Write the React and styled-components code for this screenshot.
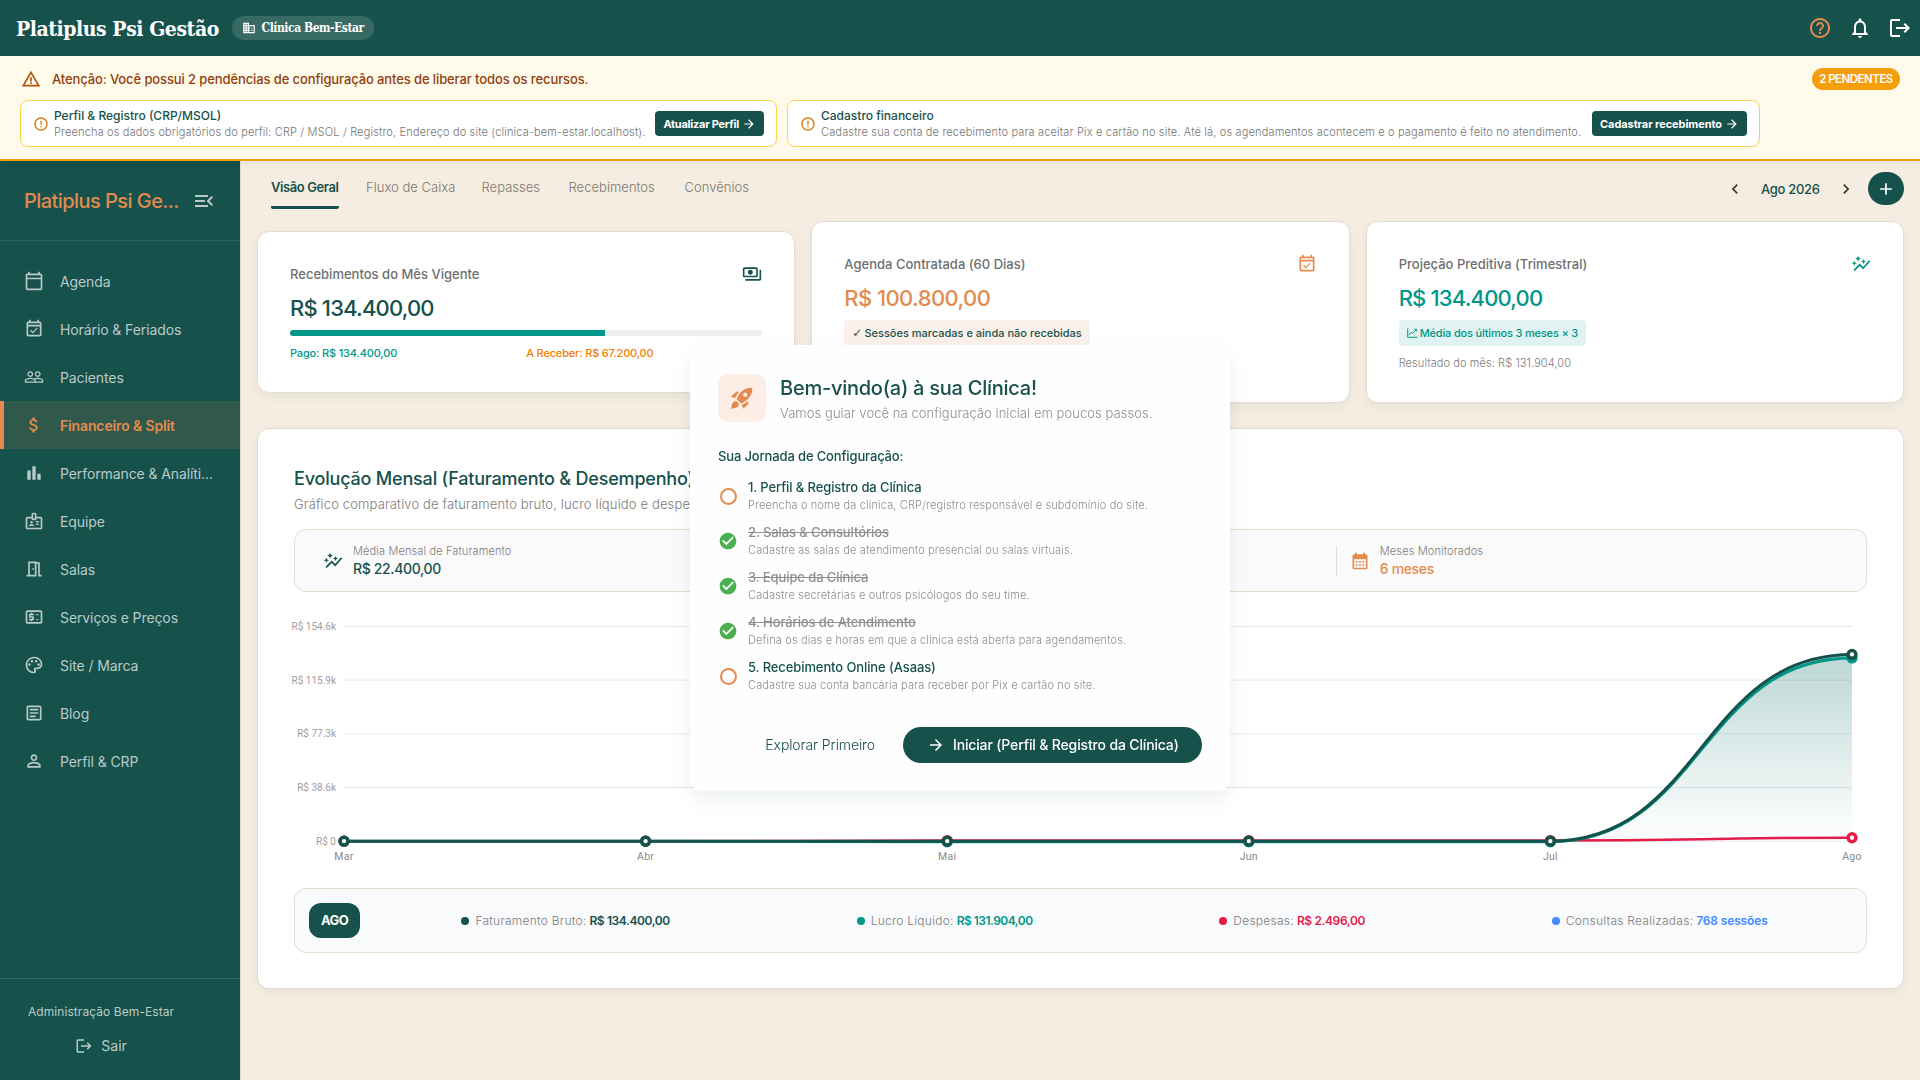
import styled, { createGlobalStyle } from "styled-components";
import {
    MdAdd,
    MdArrowForward,
    MdAttachMoney,
    MdAutoGraph,
    MdBarChart,
    MdBusiness,
    MdCalendarMonth,
    MdCheckCircle,
    MdChevronLeft,
    MdChevronRight,
    MdErrorOutline,
    MdHelpOutline,
    MdLogout,
    MdMenuOpen,
    MdNotificationsNone,
    MdOutlineArticle,
    MdOutlineBadge,
    MdOutlineCalendarToday,
    MdOutlineEventAvailable,
    MdOutlineMeetingRoom,
    MdOutlinePalette,
    MdOutlinePayments,
    MdOutlinePriceChange,
    MdPeopleOutline,
    MdPersonOutline,
    MdRocketLaunch,
    MdWarningAmber,
} from "react-icons/md";

const green = "#16514b";
const teal = "#009688";
const orange = "#e38b4f";
const red = "#e11d48";

const menu = [
    { label: "Agenda", Icon: MdOutlineCalendarToday },
    { label: "Horário & Feriados", Icon: MdOutlineEventAvailable },
    { label: "Pacientes", Icon: MdPeopleOutline },
    { label: "Financeiro & Split", Icon: MdAttachMoney, active: true },
    { label: "Performance & Analíti...", Icon: MdBarChart },
    { label: "Equipe", Icon: MdOutlineBadge },
    { label: "Salas", Icon: MdOutlineMeetingRoom },
    { label: "Serviços e Preços", Icon: MdOutlinePriceChange },
    { label: "Site / Marca", Icon: MdOutlinePalette },
    { label: "Blog", Icon: MdOutlineArticle },
    { label: "Perfil & CRP", Icon: MdPersonOutline },
];

const tabs = [
    { label: "Visão Geral", width: 67.5 },
    { label: "Fluxo de Caixa", width: 88 },
    { label: "Repasses", width: 59.5 },
    { label: "Recebimentos", width: 88.5 },
    { label: "Convênios", width: 65 },
];

const pendencias = [
    {
        title: "Perfil & Registro (CRP/MSOL)",
        text: "Preencha os dados obrigatórios do perfil: CRP / MSOL / Registro, Endereço do site (clinica-bem-estar.localhost).",
        action: "Atualizar Perfil",
        width: 757,
        spacing: "-0.25px",
    },
    {
        title: "Cadastro financeiro",
        text: "Cadastre sua conta de recebimento para aceitar Pix e cartão no site. Até lá, os agendamentos acontecem e o pagamento é feito no atendimento.",
        action: "Cadastrar recebimento",
        width: 973,
        spacing: "-0.08px",
    },
];

const steps = [
    { title: "1. Perfil & Registro da Clínica", text: "Preencha o nome da clínica, CRP/registro responsável e subdomínio do site." },
    { title: "2. Salas & Consultórios", text: "Cadastre as salas de atendimento presencial ou salas virtuais.", done: true },
    { title: "3. Equipe da Clínica", text: "Cadastre secretárias e outros psicólogos do seu time.", done: true },
    { title: "4. Horários de Atendimento", text: "Defina os dias e horas em que a clínica está aberta para agendamentos.", done: true },
    { title: "5. Recebimento Online (Asaas)", text: "Cadastre sua conta bancária para receber por Pix e cartão no site." },
];

const resumo = [
    { label: "Faturamento Bruto:", value: "R$ 134.400,00", color: green, spacing: "-0.4px" },
    { label: "Lucro Líquido:", value: "R$ 131.904,00", color: teal, spacing: "-0.52px" },
    { label: "Despesas:", value: "R$ 2.496,00", color: red, spacing: "-0.38px" },
    { label: "Consultas Realizadas:", value: "768 sessões", color: "#448aff", spacing: "-0.15px" },
];

const meses = ["Mar", "Abr", "Mai", "Jun", "Jul", "Ago"];
const bruto = [0, 0, 0, 0, 0, 134400];
const liquido = [0, 0, -450, -450, -450, 131904];
const despesas = [0, 0, 450, 450, 450, 2496];
const escala = [
    { value: 154600, label: "R$ 154.6k" },
    { value: 115950, label: "R$ 115.9k" },
    { value: 77300, label: "R$ 77.3k" },
    { value: 38650, label: "R$ 38.6k" },
    { value: 0, label: "R$ 0" },
];

const x = i => 50 + i * 301.6;
const y = v => 229.2 - (v / 154600) * 214.8;

function curve(data) {
    let d = `M${x(0)} ${y(data[0])}`;
    for (let i = 1; i < data.length; i++) {
        const half = (x(i) + x(i - 1)) / 2;
        d += ` C${half} ${y(data[i - 1])} ${half} ${y(data[i])} ${x(i)} ${y(data[i])}`;
    }
    return d;
}

function Serie({ data, color, width }) {
    return (
        <g>
            <path d={curve(data)} fill="none" stroke={color} strokeWidth={width} />
            {data.map((v, i) => (
                <circle key={i} cx={x(i)} cy={y(v)} r="3.9" fill="#fff" stroke={color} strokeWidth="3.5" />
            ))}
        </g>
    );
}

function Chart() {
    return (
        <ChartSvg width="1573" height="256">
            <defs>
                <linearGradient id="area" x1="0" y1="0" x2="0" y2="1">
                    <stop offset="0" stopColor="#0f7268" stopOpacity="0.28" />
                    <stop offset="1" stopColor="#0f7268" stopOpacity="0" />
                </linearGradient>
            </defs>
            {escala.map(e => (
                <g key={e.label}>
                    <line x1={x(0)} x2={x(5)} y1={y(e.value)} y2={y(e.value)} stroke="#e2e8f0" />
                    <text x="42" y={y(e.value) + 3.5} textAnchor="end" fill="#9e9e9e" fontSize="10">{e.label}</text>
                </g>
            ))}
            <path d={`${curve(bruto)} V${y(0)} H${x(0)} Z`} fill="url(#area)" />
            <Serie data={despesas} color={red} width="2.5" />
            <Serie data={liquido} color={teal} width="3" />
            <Serie data={bruto} color={green} width="3" />
            {meses.map((m, i) => (
                <text key={m} x={x(i)} y="247.8" textAnchor="middle" fill="#8a8a8a" fontSize="10.5" letterSpacing="0.3">{m}</text>
            ))}
        </ChartSvg>
    );
}

function TrendIcon() {
    return (
        <svg width="11" height="10" viewBox="0 0 11 10" fill="none" stroke="currentColor">
            <path d="M0.7 0.5V9.3H10.5" />
            <path d="M1.8 7.2L4 4.2L5.6 5.4L9.4 1.6M7.2 1.3H9.7V3.6" strokeWidth="0.9" />
        </svg>
    );
}

export default function App() {
    return (
        <>
            <GlobalStyle />
            <Page>
                <Header>
                    <Brand>Platiplus Psi Gestão</Brand>
                    <ClinicPill><MdBusiness size={14} /> Clínica Bem-Estar</ClinicPill>
                    <HeaderIcons>
                        <MdHelpOutline color={orange} />
                        <MdNotificationsNone />
                        <MdLogout />
                    </HeaderIcons>
                </Header>

                <Banner>
                    <BannerTop>
                        <MdWarningAmber size={20} color="#b45309" />
                        <h2>Atenção: Você possui 2 pendências de configuração antes de liberar todos os recursos.</h2>
                        <PendingBadge>2 PENDENTES</PendingBadge>
                    </BannerTop>
                    <BannerItems>
                        {pendencias.map(p => (
                            <BannerItem key={p.title} $width={p.width}>
                                <MdErrorOutline size={16} color="#d97706" />
                                <div>
                                    <h3>{p.title}</h3>
                                    <p>{p.text}</p>
                                </div>
                                <SmallButton $spacing={p.spacing}>{p.action} <MdArrowForward size={14} /></SmallButton>
                            </BannerItem>
                        ))}
                    </BannerItems>
                </Banner>

                <Body>
                    <Sidebar>
                        <SidebarTop>
                            <h1>Platiplus Psi Ge...</h1>
                            <MdMenuOpen size={24} />
                        </SidebarTop>
                        <Menu>
                            {menu.map(({ label, Icon, active }) => (
                                <MenuItem key={label} $active={active}>
                                    <Icon size={20} />
                                    {label}
                                </MenuItem>
                            ))}
                        </Menu>
                        <SidebarBottom>
                            <User>
                                Administração Bem-Estar
                                <Logout><MdLogout size={18} /> Sair</Logout>
                            </User>
                        </SidebarBottom>
                    </Sidebar>

                    <Main>
                        <TopBar>
                            <Tabs>
                                {tabs.map((t, i) => (
                                    <Tab key={t.label} $active={i === 0} $width={t.width}>{t.label}</Tab>
                                ))}
                            </Tabs>
                            <Period>
                                <MdChevronLeft size={20} />
                                <span>Ago 2026</span>
                                <MdChevronRight size={20} />
                                <AddButton><MdAdd size={20} /></AddButton>
                            </Period>
                        </TopBar>

                        <Cards>
                            <Card $short>
                                <CardTop>Recebimentos do Mês Vigente <MdOutlinePayments size={20} color={green} /></CardTop>
                                <Value $color={green}>R$ 134.400,00</Value>
                                <Progress><div /></Progress>
                                <Split>
                                    <Amount $color={teal}>Pago: R$ 134.400,00</Amount>
                                    <Amount $color="#f57c00">A Receber: R$ 67.200,00</Amount>
                                </Split>
                            </Card>
                            <Card>
                                <CardTop>Agenda Contratada (60 Dias) <MdOutlineEventAvailable size={20} color={orange} /></CardTop>
                                <Value $color={orange} $spacing="-0.58px">R$ 100.800,00</Value>
                                <Chip $color={green} $bg="#fcf1ea"><b>✓</b>Sessões marcadas e ainda não recebidas</Chip>
                            </Card>
                            <Card>
                                <CardTop>Projeção Preditiva (Trimestral) <MdAutoGraph size={20} color={teal} /></CardTop>
                                <Value $color={teal}>R$ 134.400,00</Value>
                                <Chip $color={teal} $bg="#e0f2f1" $spacing="-0.17px"><TrendIcon />Média dos últimos 3 meses × 3</Chip>
                                <Result>Resultado do mês: R$ 131.904,00</Result>
                            </Card>
                        </Cards>

                        <ChartCard>
                            <h2>Evolução Mensal (Faturamento & Desempenho)</h2>
                            <p>Gráfico comparativo de faturamento bruto, lucro líquido e despesas</p>
                            <Stats>
                                <Stat $color={green}>
                                    <MdAutoGraph size={20} />
                                    <div>
                                        <span>Média Mensal de Faturamento</span>
                                        <strong>R$ 22.400,00</strong>
                                    </div>
                                </Stat>
                                <Stat />
                                <Stat $color={orange}>
                                    <MdCalendarMonth size={20} />
                                    <div>
                                        <span>Meses Monitorados</span>
                                        <strong>6 meses</strong>
                                    </div>
                                </Stat>
                            </Stats>
                            <Chart />
                            <Summary>
                                <MonthBadge>AGO</MonthBadge>
                                <SummaryList>
                                    {resumo.map(r => (
                                        <SummaryItem key={r.label} $color={r.color} $spacing={r.spacing}>
                                            <i />{r.label} <strong>{r.value}</strong>
                                        </SummaryItem>
                                    ))}
                                </SummaryList>
                            </Summary>
                        </ChartCard>
                    </Main>
                </Body>
            </Page>

            <Overlay>
                <Modal>
                    <ModalTop>
                        <RocketBox><MdRocketLaunch size={26} /></RocketBox>
                        <div>
                            <h2>Bem-vindo(a) à sua Clínica!</h2>
                            <p>Vamos guiar você na configuração inicial em poucos passos.</p>
                        </div>
                    </ModalTop>
                    <Journey>Sua Jornada de Configuração:</Journey>
                    <Steps>
                        {steps.map(s => (
                            <Step key={s.title} $done={s.done}>
                                {s.done ? <MdCheckCircle size={20} /> : <Ring />}
                                <div>
                                    <h3>{s.title}</h3>
                                    <p>{s.text}</p>
                                </div>
                            </Step>
                        ))}
                    </Steps>
                    <Actions>
                        <TextButton>Explorar Primeiro</TextButton>
                        <MainButton><MdArrowForward size={18} /> Iniciar (Perfil & Registro da Clínica)</MainButton>
                    </Actions>
                </Modal>
            </Overlay>
        </>
    );
}

const GlobalStyle = createGlobalStyle`
    * {
        box-sizing: border-box;
        margin: 0;
        padding: 0;
    }

    body {
        font-family: "Inter", sans-serif;
        background-color: #f5ede1;
        overflow: hidden;
    }

    button {
        border: none;
        font-family: inherit;
        white-space: nowrap;
    }

    svg {
        flex-shrink: 0;
    }
`

const Page = styled.div`
    width: 100%;
    height: 100vh;
    display: flex;
    flex-direction: column;
`

const Header = styled.header`
    height: 56px;
    flex-shrink: 0;
    background-color: ${green};
    color: #fff;
    display: flex;
    align-items: center;
    padding: 0 8px 0 16px;
    font-family: "DejaVu Serif Condensed", "DejaVu Serif", serif;
`

const Brand = styled.h1`
    width: 203px;
    font-size: 21px;
    font-weight: 700;
    letter-spacing: -0.45px;
    white-space: nowrap;
`

const ClinicPill = styled.div`
    height: 24px;
    width: 142px;
    margin-left: 12.5px;
    padding-left: 10px;
    border-radius: 12px;
    background-color: rgba(255, 255, 255, 0.15);
    display: flex;
    align-items: center;
    gap: 6px;
    font-size: 12px;
    font-weight: 700;
    letter-spacing: -0.45px;
    white-space: nowrap;
`

const HeaderIcons = styled.div`
    margin-left: auto;
    display: flex;
    gap: 16px;
    font-size: 24px;
`

const Banner = styled.section`
    position: relative;
    height: 105px;
    flex-shrink: 0;
    padding: 12px 20px;
    background-color: #fffbeb;
    border-bottom: 2px solid #f59e0b;
    box-shadow: 0 2px 8px rgba(0, 0, 0, 0.06);
`

const BannerTop = styled.div`
    height: 22px;
    display: flex;
    align-items: center;
    padding-left: 1px;

    & h2{
        margin-left: 11px;
        font-size: 13px;
        font-weight: 550;
        letter-spacing: -0.11px;
        color: #92400e;
    }
`

const PendingBadge = styled.span`
    width: 88px;
    height: 22px;
    margin-left: auto;
    border-radius: 11px;
    background-color: #f59e0b;
    color: #fff;
    font-size: 11.5px;
    font-weight: 600;
    letter-spacing: -0.5px;
    line-height: 22px;
    text-align: center;
`

const BannerItems = styled.div`
    display: flex;
    gap: 10px;
    margin-top: 10px;
`

const BannerItem = styled.div`
    width: ${p => p.$width}px;
    height: 47px;
    padding: 0 12px;
    border: 1px solid #fcd34d;
    border-radius: 8px;
    background-color: #fff;
    display: flex;
    align-items: center;

    & div{
        margin: 0 auto 0 5px;
        white-space: nowrap;
    }

    & h3{
        font-size: 12px;
        font-weight: 500;
        line-height: 17px;
        color: ${green};
    }

    & p{
        font-size: 11px;
        font-weight: 300;
        letter-spacing: 0.158px;
        line-height: 16px;
        color: #757575;
    }
`

const SmallButton = styled.button`
    height: 25px;
    padding: 0 8px;
    border-radius: 4px;
    background-color: ${green};
    color: #fff;
    font-size: 11px;
    font-weight: 700;
    letter-spacing: ${p => p.$spacing};
    display: flex;
    align-items: center;
    gap: 3px;
`

const Body = styled.div`
    flex: 1;
    display: flex;
    min-height: 0;
`

const Sidebar = styled.aside`
    width: 240px;
    flex-shrink: 0;
    background-color: ${green};
    color: #b9cbc9;
    display: flex;
    flex-direction: column;
`

const SidebarTop = styled.div`
    height: 80px;
    padding: 0 24px;
    border-bottom: 1px solid rgba(255, 255, 255, 0.1);
    display: flex;
    align-items: center;
    justify-content: space-between;

    & h1{
        color: ${orange};
        font-size: 20px;
        font-weight: 550;
        letter-spacing: -0.56px;
        white-space: nowrap;
    }
`

const Menu = styled.nav`
    flex: 1;
    padding-top: 16px;
`

const MenuItem = styled.div`
    height: 48px;
    padding-left: ${p => p.$active ? 20 : 24}px;
    border-left: ${p => p.$active ? `4px solid ${orange}` : "none"};
    background-color: ${p => p.$active ? "rgba(227, 139, 79, 0.13)" : "transparent"};
    color: ${p => p.$active ? orange : "inherit"};
    display: flex;
    align-items: center;
    gap: 16px;
    font-size: 14px;
    font-weight: ${p => p.$active ? 600 : 400};
    letter-spacing: ${p => p.$active ? "-0.14px" : "-0.1px"};
`

const SidebarBottom = styled.div`
    height: 102px;
    padding: 25px 28px 0;
    border-top: 1px solid rgba(255, 255, 255, 0.15);
    display: flex;
    align-items: flex-start;
`

const User = styled.div`
    display: flex;
    flex-direction: column;
    align-items: center;
    font-size: 12px;
    letter-spacing: 0.07px;
    line-height: 16px;
`

const Logout = styled.span`
    display: flex;
    align-items: center;
    gap: 8px;
    margin-top: 16px;
    font-size: 14px;
    line-height: 20px;
`

const Main = styled.main`
    flex: 1;
    border-left: 1px solid #e5dccb;
    padding: 0 16px;
`

const TopBar = styled.div`
    height: 60px;
    padding-left: 14px;
    display: flex;
    justify-content: space-between;
    align-items: flex-start;
`

const Tabs = styled.div`
    display: flex;
    gap: 27.5px;
    padding-top: 17px;
`

const Tab = styled.div`
    width: ${p => p.$width}px;
    padding-bottom: 10px;
    border-bottom: 3px solid ${p => p.$active ? green : "transparent"};
    border-radius: 2px;
    color: ${p => p.$active ? green : "#7b776f"};
    font-size: 13px;
    font-weight: ${p => p.$active ? 600 : 300};
    letter-spacing: ${p => p.$active ? "-0.41px" : "0.03px"};
    line-height: 18px;
    white-space: nowrap;
`

const Period = styled.div`
    display: flex;
    align-items: center;
    padding-top: 11px;
    color: #3e362c;

    & span{
        width: 59px;
        margin: 0 16px;
        color: ${green};
        font-size: 13px;
        font-weight: 500;
        letter-spacing: -0.32px;
        white-space: nowrap;
    }
`

const AddButton = styled.button`
    width: 36px;
    height: 33px;
    margin-left: 12px;
    border-radius: 17px;
    background-color: ${green};
    color: #fff;
    display: flex;
    align-items: center;
    justify-content: center;
`

const Cards = styled.div`
    display: grid;
    grid-template-columns: repeat(3, 1fr);
    gap: 16px;
`

const Card = styled.section`
    height: ${p => p.$short ? 162 : 182}px;
    align-self: center;
    padding: 32px;
    border: 1px solid #e5dccb;
    border-radius: 12px;
    background-color: #fff;
    box-shadow: 0 4px 12px rgba(22, 81, 75, 0.06);
`

const CardTop = styled.div`
    height: 19px;
    display: flex;
    align-items: center;
    justify-content: space-between;
    color: #6f6f6f;
    font-size: 13px;
    font-weight: 450;
    letter-spacing: 0.01px;
`

const Value = styled.div`
    margin: 11px 0 8px;
    color: ${p => p.$color};
    font-size: 22px;
    font-weight: 550;
    letter-spacing: ${p => p.$spacing || "-0.82px"};
    line-height: 28px;
`

const Progress = styled.div`
    height: 6px;
    border-radius: 3px;
    background-color: #eee;
    overflow: hidden;

    & div{
        width: 66.7%;
        height: 100%;
        background-color: ${teal};
    }
`

const Split = styled.div`
    display: grid;
    grid-template-columns: 1fr 1fr;
    margin-top: 10px;
`

const Amount = styled.span`
    color: ${p => p.$color};
    font-size: 11px;
    font-weight: 550;
    letter-spacing: -0.16px;
    line-height: 14px;
`

const Chip = styled.div`
    width: fit-content;
    height: 26px;
    padding: 0 8px;
    border-radius: 4px;
    background-color: ${p => p.$bg};
    color: ${p => p.$color};
    display: flex;
    align-items: center;
    gap: 2px;
    font-size: 11px;
    font-weight: 500;
    letter-spacing: ${p => p.$spacing || "0px"};

    & b{
        font-family: "DejaVu Sans", sans-serif;
        font-size: 12px;
    }
`

const Result = styled.p`
    margin-top: 10px;
    color: #7c7c7c;
    font-size: 11px;
    font-weight: 300;
    letter-spacing: 0.09px;
    line-height: 14px;
`

const ChartCard = styled.section`
    height: 561px;
    margin-top: 25px;
    padding: 36px;
    border: 1px solid #e5dccb;
    border-radius: 12px;
    background-color: #fff;
    box-shadow: 0 4px 12px rgba(22, 81, 75, 0.06);

    & h2{
        color: ${green};
        font-size: 18px;
        font-weight: 550;
        letter-spacing: -0.19px;
        line-height: 27px;
    }

    & > p{
        margin-top: 3px;
        color: #7c7c7c;
        font-size: 13px;
        font-weight: 300;
        letter-spacing: 0.15px;
        line-height: 18px;
    }
`

const Stats = styled.div`
    height: 63px;
    margin-top: 16px;
    padding: 0 16px 0 14px;
    border: 1px solid #e5dccb;
    border-radius: 12px;
    background-color: #fafafa;
    display: grid;
    grid-template-columns: repeat(3, 1fr);
    align-items: center;
`

const Stat = styled.div`
    height: 30px;
    padding-left: 14px;
    display: flex;
    align-items: center;
    gap: 10px;
    color: ${p => p.$color};

    & + &{
        padding-left: 12.5px;
        border-left: 1px solid #e5dccb;
    }

    & span, & strong{
        display: block;
        white-space: nowrap;
    }

    & span{
        padding-top: 1px;
        color: #7c7c7c;
        font-size: 11px;
        font-weight: 300;
        letter-spacing: 0.13px;
        line-height: 15px;
    }

    & strong{
        font-size: 14px;
        font-weight: 550;
        letter-spacing: -0.36px;
        line-height: 19px;
    }
`

const ChartSvg = styled.svg`
    display: block;
    margin: 20px 0;
    overflow: visible;
    font-family: "Roboto", sans-serif;
`

const Summary = styled.div`
    height: 65px;
    padding: 0 5px 0 14px;
    border: 1px solid #e5dccb;
    border-radius: 12px;
    background-color: #f8fafc;
    display: flex;
    align-items: center;
`

const MonthBadge = styled.span`
    width: 51px;
    height: 35px;
    border-radius: 12px;
    background-color: ${green};
    color: #fff;
    font-size: 13px;
    font-weight: 700;
    letter-spacing: -0.6px;
    line-height: 35px;
    text-align: center;
`

const SummaryList = styled.div`
    flex: 1;
    margin-left: 8px;
    display: flex;
    justify-content: space-around;
`

const SummaryItem = styled.div`
    display: flex;
    align-items: center;
    color: #7c7c7c;
    font-size: 12px;
    font-weight: 300;
    letter-spacing: 0.25px;

    & i{
        width: 8px;
        height: 8px;
        margin-right: 6px;
        border-radius: 50%;
        background-color: ${p => p.$color};
    }

    & strong{
        margin-left: 3px;
        color: ${p => p.$color};
        font-weight: 600;
        letter-spacing: ${p => p.$spacing};
    }
`

const Overlay = styled.div`
    position: fixed;
    inset: 56px 0 0;
    display: flex;
    align-items: center;
    justify-content: center;
`

const Modal = styled.div`
    width: 540px;
    height: 446px;
    padding: 29px 28px 28px;
    border-radius: 12px;
    background-color: #fefefe;
    box-shadow: 0 8px 20px rgba(22, 81, 75, 0.08);
`

const ModalTop = styled.div`
    display: flex;
    align-items: center;
    gap: 14px;

    & h2{
        color: ${green};
        font-size: 20px;
        font-weight: 550;
        letter-spacing: -0.25px;
        line-height: 28px;
    }

    & p{
        margin-top: 2px;
        color: #8f8f8f;
        font-size: 13px;
        font-weight: 300;
        letter-spacing: 0.06px;
        line-height: 18px;
    }
`

const RocketBox = styled.div`
    width: 48px;
    height: 48px;
    border-radius: 10px;
    background-color: #fceee5;
    color: ${orange};
    display: flex;
    align-items: center;
    justify-content: center;
`

const Journey = styled.h3`
    margin: 25px 0 14px;
    color: ${green};
    font-size: 13px;
    font-weight: 550;
    letter-spacing: -0.14px;
    line-height: 18px;
`

const Steps = styled.div`
    display: flex;
    flex-direction: column;
    gap: 11px;
`

const Step = styled.div`
    height: 34px;
    display: flex;
    align-items: center;
    gap: 10px;
    color: ${p => p.$done ? "#4caf50" : orange};

    & h3{
        color: ${p => p.$done ? "#8f8f8f" : green};
        font-size: 13px;
        font-weight: 550;
        letter-spacing: -0.1px;
        line-height: 17px;
        text-decoration: ${p => p.$done ? "line-through" : "none"};
    }

    & p{
        margin-top: 1px;
        color: #8f8f8f;
        font-size: 11px;
        font-weight: 300;
        letter-spacing: 0.14px;
        line-height: 16px;
    }
`

const Ring = styled.span`
    width: 17px;
    height: 17px;
    margin: 0 1.5px;
    border: 2px solid ${orange};
    border-radius: 50%;
`

const Actions = styled.div`
    margin-top: 34px;
    display: flex;
    justify-content: flex-end;
    gap: 28px;
`

const TextButton = styled.button`
    padding-bottom: 2px;
    background: none;
    color: ${green};
    font-size: 14px;
    font-weight: 300;
    letter-spacing: -0.1px;
`

const MainButton = styled.button`
    width: 299px;
    height: 36px;
    padding: 0 0 1px 24px;
    border-radius: 18px;
    background-color: ${green};
    color: #fff;
    display: flex;
    align-items: center;
    gap: 8px;
    font-size: 14px;
    font-weight: 450;
    letter-spacing: -0.15px;
`
